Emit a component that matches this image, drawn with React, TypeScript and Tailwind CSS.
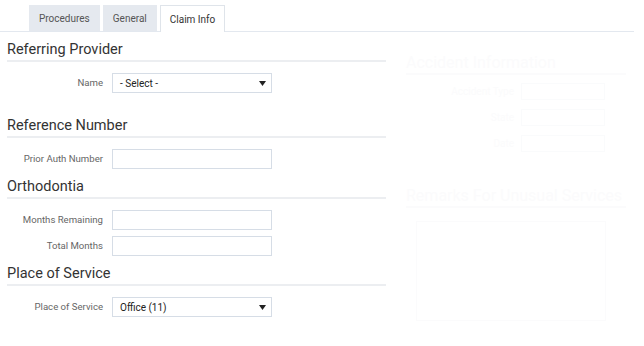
const font = { fontFamily: 'Roboto, "Liberation Sans", sans-serif' }

function Caret() {
  return (
    <svg width="7" height="5" viewBox="0 0 7 5" className="shrink-0">
      <path d="M0 0h7L3.5 5z" fill="#222" />
    </svg>
  )
}

function Heading({ title, className }: { title: string; className: string }) {
  return (
    <div className={`h-[22px] border-b-2 border-[#eceef1] text-[14.5px] leading-5 text-[#333] ${className}`}>
      {title}
    </div>
  )
}

function Row({ label, className, children }: { label: string; className: string; children: React.ReactNode }) {
  return (
    <div className={`flex items-center ${className}`}>
      <div className="w-[96px] text-right text-[9.6px] text-[#666]">{label}</div>
      <div className="ml-[9px]">{children}</div>
    </div>
  )
}

function Select({ value }: { value: string }) {
  return (
    <div className="flex h-[20px] w-[160px] items-center justify-between border border-[#d6dde6] bg-white pl-[7px] pr-[5px] text-[10px] text-[#222]">
      <span>{value}</span>
      <Caret />
    </div>
  )
}

function Input() {
  return <div className="h-[20px] w-[160px] border border-[#d6dde6] bg-white" />
}

const tabs = ['Procedures', 'General', 'Claim Info']

export default function App() {
  return (
    <div className="h-[346px] w-[644px] overflow-hidden bg-white" style={font}>
      <div className="w-[634px]">
        <div className="flex h-[32px] items-end gap-[3px] border-b border-[#e3e8ef] pl-[29px]">
          {tabs.map((t) => {
            const active = t === 'Claim Info'
            return (
              <div
                key={t}
                className={
                  active
                    ? '-mb-px flex h-[27px] items-center border border-b-0 border-[#dfe4ea] bg-white px-[9px] text-[10px] text-[#333]'
                    : 'flex h-[26px] items-center bg-[#e5e9ef] px-[10px] text-[10px] text-[#555]'
                }
              >
                {t}
              </div>
            )
          })}
        </div>

        <div className="flex">
          <div className="w-[386px] pl-[7px]">
            <Heading title="Referring Provider" className="mt-[8px]" />
            <Row label="Name" className="mt-[11px]">
              <Select value="- Select -" />
            </Row>

            <Heading title="Reference Number" className="mt-[23px]" />
            <Row label="Prior Auth Number" className="mt-[11px]">
              <Input />
            </Row>

            <Heading title="Orthodontia" className="mt-[8px]" />
            <Row label="Months Remaining" className="mt-[11px]">
              <Input />
            </Row>
            <Row label="Total Months" className="mt-[6px]">
              <Input />
            </Row>

            <Heading title="Place of Service" className="mt-[8px]" />
            <Row label="Place of Service" className="mt-[11px]">
              <Select value="Office (11)" />
            </Row>
          </div>

          {/* faded right column */}
          <div className="ml-[20px] w-[220px] text-[#fbfbfc]">
            <div className="mt-[21px] h-[22px] border-b-2 border-[#fbfbfc] text-[16px] leading-5">Accident Information</div>
            <div className="mt-[8px] flex items-center text-[10px]">
              <div className="w-[108px] text-right">Accident Type</div>
              <div className="ml-[7px] h-[17px] w-[84px] border border-[#fafbfc]" />
            </div>
            <div className="mt-[9px] flex items-center text-[10px]">
              <div className="w-[108px] text-right">State</div>
              <div className="ml-[7px] h-[17px] w-[84px] border border-[#fafbfc]" />
            </div>
            <div className="mt-[9px] flex items-center text-[10px]">
              <div className="w-[108px] text-right">Date</div>
              <div className="ml-[7px] h-[17px] w-[84px] border border-[#fafbfc]" />
            </div>
            <div className="mt-[34px] h-[22px] whitespace-nowrap border-b-2 border-[#fbfbfc] text-[16px] leading-5">Remarks For Unusual Services</div>
            <div className="ml-[10px] mt-[13px] h-[100px] w-[190px] border border-[#fbfbfc]" />
          </div>
        </div>
      </div>
    </div>
  )
}
